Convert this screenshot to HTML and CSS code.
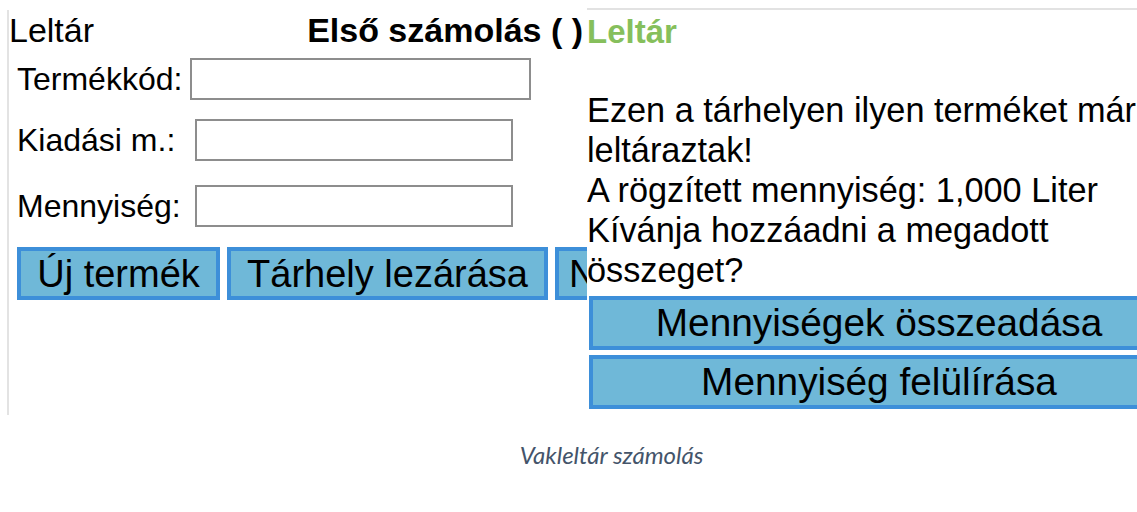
FILE: index.html
```html
<!DOCTYPE html>
<html lang="hu">
<head>
  <meta charset="UTF-8" />
  <title>Vakleltár számolás</title>
  <meta name="viewport" content="width=device-width, initial-scale=1.0" />
  <link rel="stylesheet" href="styles.css">
</head>
<body>

  <figure class="figure">
    <div class="shots">

      <!-- bal oldali képernyő: leltár űrlap -->
      <section class="shot shot-form">
        <header class="shot-head">
          <span>Leltár</span>
          <strong class="shot-title">Első számolás ( )</strong>
        </header>

        <div class="field field-code">
          <label>Termékkód:</label>
          <input type="text" />
        </div>
        <div class="field field-issue">
          <label>Kiadási m.:</label>
          <input type="text" />
        </div>
        <div class="field field-qty">
          <label>Mennyiség:</label>
          <input type="text" />
        </div>

        <div class="actions">
          <button type="button" class="btn btn-new">Új termék</button>
          <button type="button" class="btn btn-close">Tárhely lezárása</button>
          <button type="button" class="btn btn-more">Nincs több</button>
        </div>
      </section>

      <!-- jobb oldali képernyő: megerősítés -->
      <section class="shot shot-dialog">
        <h2 class="dialog-title">Leltár</h2>
        <p class="dialog-text">
          Ezen a tárhelyen ilyen terméket már<br>
          leltáraztak!<br>
          A rögzített mennyiség: 1,000 Liter<br>
          Kívánja hozzáadni a megadott<br>
          összeget?
        </p>
        <div class="dialog-actions">
          <button type="button" class="btn btn-wide">Mennyiségek összeadása</button>
          <button type="button" class="btn btn-wide">Mennyiség felülírása</button>
        </div>
      </section>

    </div>
    <figcaption class="caption">Vakleltár számolás</figcaption>
  </figure>

</body>
</html>
```

FILE: styles.css
```css
body {
  margin: 0;
  background: #fff;
  font-family: "Liberation Sans", Arial, sans-serif;
  color: #000;
}

.figure {
  margin: 0;
}

.shots {
  display: flex;
  align-items: flex-start;
}

.shot {
  flex-shrink: 0;
  overflow: hidden;
  background: #fff;
}

/* left screen */
.shot-form {
  margin-left: 7px;
  margin-top: 10px;
  border-left: 2px solid #e3e3e3;
  width: 578px;
  height: 405px;
}

.shot-head {
  display: flex;
  justify-content: space-between;
  padding-right: 4px;
  font-size: 34px;
  line-height: 40px;
}

.shot-title {
  font-weight: 700;
}

.field {
  display: flex;
  align-items: center;
  padding-left: 8px;

  label {
    font-size: 32px;
    white-space: nowrap;
  }

  input {
    box-sizing: border-box;
    height: 42px;
    border: 2px solid #8d8d8d;
    background: #fff;
    outline: none;
  }
}

.field-code {
  margin-top: 8px;
  label { width: 173px; }
  input { width: 341px; }
}

.field-issue {
  margin-top: 19px;
  label { width: 178px; }
  input { width: 318px; }
}

.field-qty {
  margin-top: 24px;
  label { width: 178px; }
  input { width: 318px; }
}

.actions {
  display: flex;
  gap: 7px;
  margin-top: 20px;
  padding-left: 8px;
}

.btn {
  box-sizing: border-box;
  flex-shrink: 0;
  height: 53px;
  padding: 0;
  border: 4px solid #3d8fd9;
  background: #6fb8d8;
  color: #000;
  font-family: inherit;
  font-size: 38px;
  line-height: 1;
  white-space: nowrap;
}

.btn-new { width: 203px; }
.btn-close { width: 321px; }
.btn-more { width: 200px; text-align: left; padding-left: 10px; }

/* right screen */
.shot-dialog {
  margin-top: 8px;
  border-top: 2px solid #e2e2e2;
  width: 550px;
  height: 402px;
}

.dialog-title {
  margin: 0;
  padding-top: 2px;
  font-size: 33px;
  line-height: 40px;
  font-weight: 700;
  color: #86bf5c;
}

.dialog-text {
  margin: 38px 0 0;
  width: 580px;
  font-size: 34.3px;
  line-height: 40px;
  white-space: nowrap;
}

.dialog-actions {
  display: flex;
  flex-direction: column;
  gap: 5px;
  margin-top: 6px;
  margin-left: 2px;

  .btn {
    width: 580px;
    height: 54px;
    font-size: 38.8px;
  }
}

/* caption */
.caption {
  margin-top: 25px;
  padding-left: 86px;
  text-align: center;
  font-family: Lato, "Open Sans", sans-serif;
  font-style: italic;
  font-size: 24px;
  color: #44546a;
}
```
